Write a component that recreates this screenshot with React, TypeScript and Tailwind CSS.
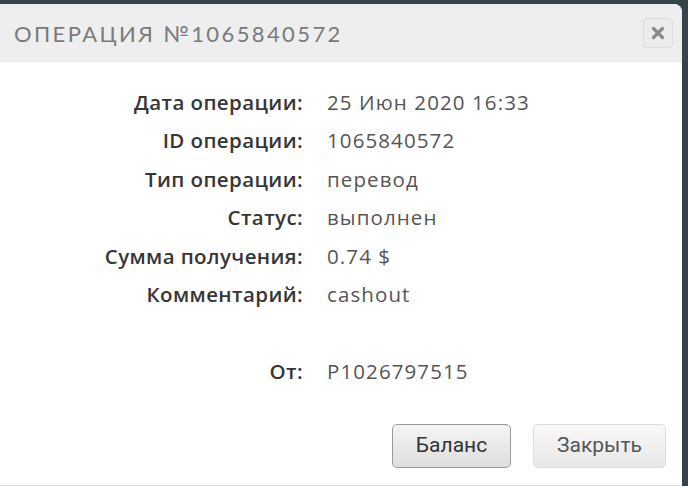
import React from "react";

const rows: [string, string][] = [
  ["Дата операции:", "25 Июн 2020 16:33"],
  ["ID операции:", "1065840572"],
  ["Тип операции:", "перевод"],
  ["Статус:", "выполнен"],
  ["Сумма получения:", "0.74 $"],
  ["Комментарий:", "cashout"],
  ["", ""],
  ["От:", "P1026797515"],
];

export default function App() {
  return (
    <div className="w-[688px] h-[486px] bg-[#37434b] pt-[4px] pr-[6px] overflow-hidden">
      <div className="h-full bg-white rounded-tr-[8px] overflow-hidden flex flex-col border-b border-[#e6e6e6]">
        <div className="h-[58px] shrink-0 bg-[#efeeee] flex items-center justify-between pl-[14px] pr-[9px] border-b border-[#e8e8e8]">
          <div
            className="text-[22px] tracking-[2.4px] text-[#7a7a7a] leading-none pt-[2px]"
            style={{ fontFamily: "Lato, 'Noto Sans', sans-serif" }}
          >
            ОПЕРАЦИЯ №1065840572
          </div>
          <button className="w-[30px] h-[30px] rounded-[4px] border border-[#dcdcdc] bg-[#ececec] flex items-center justify-center">
            <svg width="14" height="14" viewBox="0 0 14 14">
              <path d="M2.5 2.5 L11.5 11.5 M11.5 2.5 L2.5 11.5" stroke="#8a8a8a" strokeWidth="3.2" strokeLinecap="round" />
            </svg>
          </button>
        </div>
        <div className="pt-[21px] flex flex-col" style={{ fontFamily: "'Open Sans', sans-serif" }}>
          {rows.map(([l, v], i) => (
            <div key={i} className="h-[38.5px] flex items-center text-[20.5px]">
              <div className="w-[303px] text-right font-semibold tracking-[0.4px] text-[#363636]">{l}</div>
              <div className="pl-[24px] text-[#555555] tracking-[1.1px]">{v}</div>
            </div>
          ))}
        </div>
        <div className="mt-[33px] flex justify-end gap-[22px] pr-[16px]" style={{ fontFamily: "Roboto, sans-serif" }}>
          <button className="w-[119px] h-[44px] rounded-[5px] border border-[#9a9a9a] bg-gradient-to-b from-[#f5f5f5] to-[#dedede] text-[21px] text-[#333333]">
            Баланс
          </button>
          <button className="w-[133px] h-[44px] rounded-[5px] border border-[#dcdcdc] bg-gradient-to-b from-[#f8f8f8] to-[#e8e8e8] text-[21px] text-[#555555]">
            Закрыть
          </button>
        </div>
      </div>
    </div>
  );
}
